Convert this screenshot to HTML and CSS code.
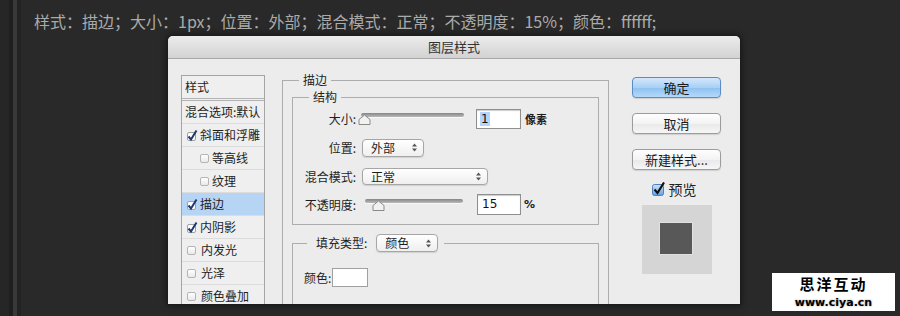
FILE: index.html
```html
<!DOCTYPE html>
<html lang="zh-CN">
<head>
    <meta charset="UTF-8">
    <meta name="viewport" content="width=device-width, initial-scale=1.0">
    <title>图层样式 - 描边</title>
    <link rel="stylesheet" href="styles.css">
</head>
<body>
    <p class="caption">样式：描边；大小：1px；位置：外部；混合模式：正常；不透明度：15%；颜色：ffffff;</p>

    <div class="dialog">
        <div class="titlebar">图层样式</div>
        <div class="dialog-body">
            <ul class="style-list">
                <li class="head">样式</li>
                <li>混合选项:默认</li>
                <li><svg class="tick" width="13" height="13" viewBox="0 0 13 13"><rect x="1.5" y="3.5" width="8" height="8" rx="1.5" fill="#fff" stroke="#a0a0a0"/><path d="M2.5 7.5 L5 10.5 L10.5 1.5" fill="none" stroke="#1f3a70" stroke-width="2"/></svg>斜面和浮雕</li>
                <li class="sub"><span class="box"></span>等高线</li>
                <li class="sub"><span class="box"></span>纹理</li>
                <li class="selected"><svg class="tick" width="13" height="13" viewBox="0 0 13 13"><rect x="1.5" y="3.5" width="8" height="8" rx="1.5" fill="#fff" stroke="#a0a0a0"/><path d="M2.5 7.5 L5 10.5 L10.5 1.5" fill="none" stroke="#1f3a70" stroke-width="2"/></svg>描边</li>
                <li><svg class="tick" width="13" height="13" viewBox="0 0 13 13"><rect x="1.5" y="3.5" width="8" height="8" rx="1.5" fill="#fff" stroke="#a0a0a0"/><path d="M2.5 7.5 L5 10.5 L10.5 1.5" fill="none" stroke="#1f3a70" stroke-width="2"/></svg>内阴影</li>
                <li><span class="box"></span>内发光</li>
                <li><span class="box"></span>光泽</li>
                <li><span class="box"></span>颜色叠加</li>
            </ul>

            <div class="settings">
                <fieldset class="group">
                    <legend>描边</legend>
                    <fieldset class="group inner">
                        <legend>结构</legend>
                        <div class="field">
                            <label>大小:</label>
                            <div class="slider size"><svg class="thumb" style="left: -3px" width="13" height="11" viewBox="0 0 13 11"><path d="M1 10.5 V5.5 L6.5 1 L12 5.5 V10.5 Z" fill="#f2f2f2" stroke="#8a8a8a"/></svg></div>
                            <span class="num"><span class="sel">1</span></span>
                            <span class="unit">像素</span>
                        </div>
                        <div class="field">
                            <label>位置:</label>
                            <div class="popup short">外部<svg width="5" height="9" viewBox="0 0 5 9"><path d="M0 3.5 L2.5 0.5 L5 3.5 Z M0 5.5 L2.5 8.5 L5 5.5 Z" fill="#555"/></svg></div>
                        </div>
                        <div class="field">
                            <label>混合模式:</label>
                            <div class="popup long">正常<svg width="5" height="9" viewBox="0 0 5 9"><path d="M0 3.5 L2.5 0.5 L5 3.5 Z M0 5.5 L2.5 8.5 L5 5.5 Z" fill="#555"/></svg></div>
                        </div>
                        <div class="field last">
                            <label>不透明度:</label>
                            <div class="slider opacity"><svg class="thumb" style="left: 7px" width="13" height="11" viewBox="0 0 13 11"><path d="M1 10.5 V5.5 L6.5 1 L12 5.5 V10.5 Z" fill="#f2f2f2" stroke="#8a8a8a"/></svg></div>
                            <span class="num small">15</span>
                            <span class="unit pct">%</span>
                        </div>
                    </fieldset>

                    <fieldset class="group fill">
                        <legend>填充类型:<span class="popup short">颜色<svg width="5" height="9" viewBox="0 0 5 9"><path d="M0 3.5 L2.5 0.5 L5 3.5 Z M0 5.5 L2.5 8.5 L5 5.5 Z" fill="#555"/></svg></span></legend>
                        <div class="field color-row">
                            <label>颜色:</label>
                            <span class="color-well"></span>
                        </div>
                    </fieldset>
                </fieldset>
            </div>

            <div class="actions">
                <button class="btn default">确定</button>
                <button class="btn">取消</button>
                <button class="btn">新建样式...</button>
                <label class="preview-check"><svg width="14" height="14" viewBox="0 0 14 14"><defs><linearGradient id="aqua" x1="0" y1="0" x2="0" y2="1"><stop offset="0" stop-color="#cfe4fa"/><stop offset="1" stop-color="#5f9fe4"/></linearGradient></defs><rect x="0.5" y="2.5" width="11" height="11" rx="2" fill="url(#aqua)" stroke="#4f7fb8"/><path d="M2.5 7.5 L5.5 11 L12 0.5" fill="none" stroke="#111" stroke-width="2.2"/></svg>预览</label>
                <div class="preview"><div class="swatch"></div></div>
            </div>
        </div>
    </div>

    <div class="stamp">
        <b>思洋互动</b>
        <span>www.ciya.cn</span>
    </div>
</body>
</html>
```

FILE: styles.css
```css
* {
    box-sizing: border-box;
}
body {
    margin: 0;
    width: 900px;
    height: 316px;
    overflow: hidden;
    position: relative;
    font-family: "Noto Sans CJK SC", sans-serif;
    color: #1e1e1e;
    background: linear-gradient(to right, #262626 0 9px, #1f1f1f 9px 13px, #393939 13px 17px, #232323 17px 21px, #292929 21px);
}
.caption {
    margin: 0;
    padding: 12px 0 0 34px;
    font-size: 16px;
    line-height: 18px;
    color: #ababab;
}

/* dialog frame */
.dialog {
    margin: 6px 0 0 168px;
    width: 572px;
    height: 268px;
    display: flex;
    flex-direction: column;
    background: #ececec;
    border-radius: 5px 5px 0 0;
    box-shadow: 0 0 0 1px #1c1c1c, 0 0 6px 2px rgba(0,0,0,0.4);
    overflow: hidden;
}
.titlebar {
    height: 23px;
    flex: none;
    text-align: center;
    font-size: 13px;
    line-height: 22px;
    color: #333;
    background: linear-gradient(#ececec, #d2d2d2);
    border-bottom: 1px solid #a8a8a8;
}
.dialog-body {
    flex: 1;
    min-height: 0;
    display: flex;
    align-items: flex-start;
    padding: 16px 19px 0 13px;
}

/* left list */
.style-list {
    list-style: none;
    margin: 0;
    padding: 0;
    width: 84px;
    flex: none;
    border: 1px solid #a4a4a4;
    background: #efefef;
    font-size: 12px;
}
.style-list li {
    height: 23px;
    display: flex;
    align-items: center;
    padding-left: 3px;
    border-bottom: 1px solid #dcdcdc;
    white-space: nowrap;
    line-height: 1;
}
.style-list li.head {
    height: 25px;
    border-bottom: 3px double #b3b3b3;
}
.style-list li.sub {
    padding-left: 18px;
}
.style-list li.selected {
    background: #b6d5f5;
}
.tick {
    margin: 0 1px 0 1px;
    flex: none;
}
.box {
    width: 9px;
    height: 9px;
    margin: 0 5px 0 2px;
    flex: none;
    border: 1px solid #b4b4b4;
    border-radius: 2px;
    background: linear-gradient(#ffffff, #e9e9e9);
}
.sub .box {
    margin: 0 3px 0 0;
}

/* settings groups */
.settings {
    width: 327px;
    flex: none;
    margin: -2px 0 0 17px;
}
fieldset.group {
    margin: 0;
    min-width: 0;
    border: 1px solid #adadad;
    padding: 0 9px 40px;
    font-size: 12px;
}
fieldset.group legend {
    margin-left: 7px;
    padding: 0 4px;
    line-height: 14px;
}
fieldset.inner {
    margin-top: 3px;
    padding: 0 0 6px 11px;
}
fieldset.inner legend {
    margin-left: 5px;
}
fieldset.fill {
    margin-top: 9px;
    padding: 0 0 40px 11px;
}
fieldset.fill legend {
    margin-left: 3px;
    padding: 0 6px 0 9px;
    line-height: 18px;
}
fieldset.fill legend .popup {
    display: inline-flex;
    vertical-align: top;
    margin-left: 9px;
}

.field {
    height: 29px;
    display: flex;
    align-items: center;
}
.field.last {
    height: 27px;
}
.field label {
    width: 52px;
    flex: none;
    text-align: right;
    white-space: nowrap;
}

.slider {
    position: relative;
    height: 12px;
    flex: none;
}
.slider::before {
    content: "";
    position: absolute;
    left: 0;
    right: 0;
    top: 0;
    height: 4px;
    border-radius: 2px;
    background: linear-gradient(#858585, #b9b9b9);
    box-shadow: 0 1px 0 #f8f8f8;
}
.slider.size {
    width: 103px;
    margin-left: 5px;
}
.slider.opacity {
    width: 98px;
    margin-left: 9px;
}
.thumb {
    position: absolute;
    top: 1px;
}

.num {
    width: 45px;
    height: 20px;
    flex: none;
    margin-left: 12px;
    padding-left: 3px;
    border: 1px solid #8f8f8f;
    background: #fff;
    box-shadow: inset 0 1px 1px rgba(0,0,0,0.2);
    font-family: "DejaVu Sans", sans-serif;
    font-size: 12px;
    line-height: 18px;
    color: #111;
}
.num .sel {
    background: #b4d4fb;
    padding: 0 1px;
}
.num.small {
    width: 44px;
    height: 21px;
    margin-left: 14px;
    padding-left: 4px;
    line-height: 19px;
}
.unit {
    margin-left: 4px;
    font-size: 11px;
    font-weight: bold;
}
.unit.pct {
    margin-left: 3px;
    font-family: "DejaVu Sans", sans-serif;
}

.popup {
    display: flex;
    align-items: center;
    justify-content: space-between;
    height: 18px;
    padding: 0 6px 0 8px;
    margin-left: 6px;
    border: 1px solid #a6a6a6;
    border-radius: 4px;
    background: linear-gradient(#ffffff, #efefef);
    box-shadow: 0 1px 1px rgba(0,0,0,0.12);
    font-size: 12px;
    line-height: 16px;
}
.popup.short {
    width: 62px;
}
.popup.long {
    width: 126px;
    height: 17px;
}

.color-row {
    height: auto;
    padding-top: 16px;
}
.color-well {
    width: 36px;
    height: 19px;
    margin-left: 1px;
    border: 1px solid #a0a0a0;
    background: #fff;
}
.color-row label {
    width: auto;
}

/* right column */
.actions {
    width: 89px;
    flex: none;
    margin: 2px 0 0 23px;
    display: flex;
    flex-direction: column;
    align-items: center;
}
.btn {
    width: 89px;
    height: 21px;
    margin-bottom: 15px;
    padding: 0;
    border: 1px solid #9c9c9c;
    border-radius: 4px;
    background: linear-gradient(#fefefe, #f3f3f3 50%, #e8e8e8 51%, #f6f6f6);
    box-shadow: 0 1px 1px rgba(0,0,0,0.12);
    font-family: "Noto Sans CJK SC", sans-serif;
    font-size: 13px;
    line-height: 19px;
    color: #1a1a1a;
}
.btn.default {
    border-color: #5b8bc4;
    background: linear-gradient(#d3e7fb, #a9d0f6 50%, #8dc0f2 51%, #b4d9fa);
}
.btn:nth-child(3) {
    margin-bottom: 0;
}
.preview-check {
    margin-top: 11px;
    height: 16px;
    display: flex;
    align-items: center;
    gap: 3px;
    font-size: 14px;
    line-height: 16px;
    margin-left: -5px;
}
.preview {
    margin-top: 8px;
    width: 70px;
    height: 69px;
    background: #d5d5d5;
    display: flex;
    align-items: center;
    justify-content: center;
}
.swatch {
    width: 34px;
    height: 33px;
    margin-top: -2px;
    margin-left: -1px;
    background: #585858;
    border: 1px solid #e0e0e0;
}

/* watermark */
.stamp {
    position: absolute;
    right: 5px;
    bottom: 5px;
    width: 123px;
    height: 38px;
    background: #fff;
    display: flex;
    flex-direction: column;
    align-items: center;
    padding-top: 2px;
    color: #000;
}
.stamp b {
    font-size: 15px;
    line-height: 17px;
    letter-spacing: 2px;
}
.stamp span {
    margin-top: 4px;
    font-family: "DejaVu Sans", sans-serif;
    font-weight: bold;
    font-size: 11px;
    line-height: 13px;
    text-shadow: 0 0 2px #999;
}
```
